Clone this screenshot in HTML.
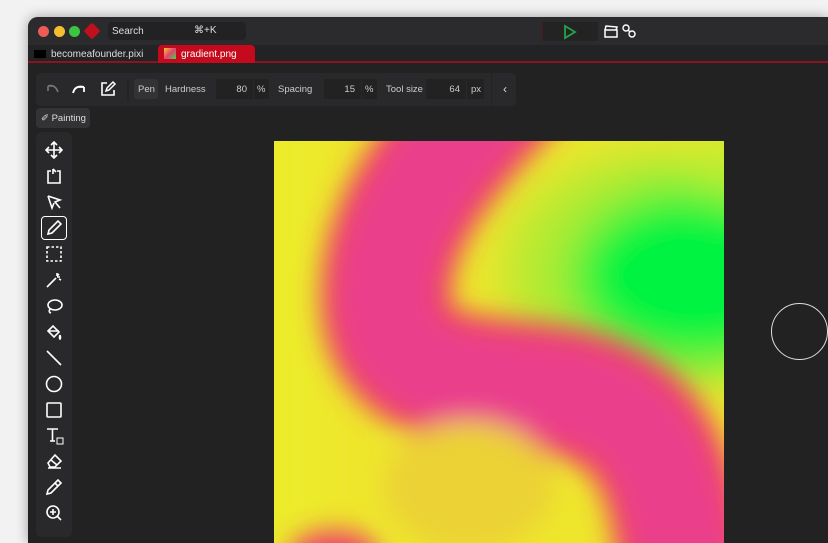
<!DOCTYPE html>
<html><head><style>
*{margin:0;padding:0;box-sizing:border-box}
html,body{width:828px;height:543px;overflow:hidden}
body{background:#f2f2f2;font-family:"Liberation Sans",sans-serif;position:relative}
.win{position:absolute;left:28px;top:17px;width:800px;height:526px;background:#222223;border-radius:10px 0 0 0;overflow:hidden;box-shadow:0 0 12px rgba(0,0,0,.35)}
.title{position:absolute;left:0;top:0;right:0;height:28px;background:#2b2b2d}
.dot{position:absolute;top:9px;width:11px;height:11px;border-radius:50%}
.tabs{position:absolute;left:0;top:28px;right:0;height:18px;background:#232325;border-bottom:2px solid #8a1520}
.t{position:absolute;font-size:10px;color:#ddd}
.tb{position:absolute;left:8px;top:56px;width:480px;height:33px;background:#29292b;border-radius:5px}
.lab{position:absolute;top:11px;font-size:9.5px;color:#ccc}
.inp{position:absolute;top:6px;height:20px;background:#222;font-size:9.5px;color:#ccc;text-align:right;padding:5px 6px 0 0}
.side{position:absolute;left:8px;top:115px;width:36px;height:405px;background:#29292b;border-radius:5px}
.side svg{position:absolute;left:9px}
.img{position:absolute;left:246px;top:124px;width:450px;height:402px;overflow:hidden}
</style></head><body>
<div class="win">
 <div class="title">
  <div class="dot" style="left:10px;background:#ee5b55"></div>
  <div class="dot" style="left:26px;background:#f5bd30"></div>
  <div class="dot" style="left:41px;background:#3cc540"></div>
  <div style="position:absolute;left:58px;top:8px;width:12px;height:12px;background:#c0101e;transform:rotate(45deg);border-radius:2px"></div>
  <div style="position:absolute;left:80px;top:5px;width:138px;height:18px;background:#222224;border-radius:4px"></div>
  <div class="t" style="left:84px;top:9px">Search</div>
  <div class="t" style="left:166px;top:8px">⌘+K</div>
  <div style="position:absolute;left:514px;top:5px;width:56px;height:19px;background:#232324;border-left:1px solid #4a1a1a"></div>
  <svg style="position:absolute;left:535px;top:7px" width="14" height="16"><path d="M2 2 L12 8 L2 14 Z" fill="none" stroke="#27a04a" stroke-width="1.8"/></svg>
  <svg style="position:absolute;left:575px;top:7px" width="16" height="15"><rect x="2" y="6" width="12" height="7" fill="none" stroke="#fff" stroke-width="1.5"/><path d="M2 6 L3 2 L14 3 L13 6" fill="none" stroke="#fff" stroke-width="1.5"/></svg>
  <svg style="position:absolute;left:593px;top:6px" width="16" height="16"><circle cx="5" cy="5" r="3" fill="none" stroke="#fff" stroke-width="1.4"/><circle cx="11" cy="11" r="3" fill="none" stroke="#fff" stroke-width="1.4"/><path d="M7 7 L9 9" stroke="#fff" stroke-width="1.4"/></svg>
 </div>
 <div class="tabs">
  <div style="position:absolute;left:6px;top:5px;width:12px;height:8px;background:#000"></div>
  <div class="t" style="left:23px;top:4px">becomeafounder.pixi</div>
  <div style="position:absolute;left:130px;top:0;width:97px;height:18px;background:#c40a1c;border-radius:4px 4px 0 0"></div>
  <div style="position:absolute;left:136px;top:3px;width:12px;height:11px;background:linear-gradient(135deg,#e8d030,#e84070,#30e050)"></div>
  <div class="t" style="left:153px;top:4px;color:#fff">gradient.png</div>
 </div>
 <div class="tb">
  <svg style="position:absolute;left:8px;top:9px" width="16" height="14"><path d="M4 4 Q11 2 14 10 M4 4 L4 9 M4 4 L9 4" fill="none" stroke="#777" stroke-width="1.6"/></svg>
  <svg style="position:absolute;left:35px;top:9px" width="16" height="14"><path d="M2 11 Q4 3 13 5 M13 5 L13 10 M13 5 L8 5" fill="none" stroke="#fff" stroke-width="1.8"/></svg>
  <svg style="position:absolute;left:63px;top:7px" width="18" height="18"><path d="M8 3 H3 V15 H15 V10" fill="none" stroke="#fff" stroke-width="1.6"/><path d="M7 11 L8 8 L14 2 L16 4 L10 10 Z" fill="none" stroke="#fff" stroke-width="1.5"/></svg>
  <div style="position:absolute;left:91px;top:6px;width:2px;height:22px;background:#242426"></div>
  <div style="position:absolute;left:98px;top:6px;width:24px;height:20px;background:#333336;border-radius:3px"></div>
  <div class="lab" style="left:102px">Pen</div>
  <div class="lab" style="left:129px">Hardness</div>
  <div class="inp" style="left:180px;width:37px">80</div>
  <div class="inp" style="left:218px;width:15px;padding:5px 0 0 3px;text-align:left">%</div>
  <div class="lab" style="left:242px">Spacing</div>
  <div class="inp" style="left:288px;width:37px">15</div>
  <div class="inp" style="left:326px;width:15px;padding:5px 0 0 3px;text-align:left">%</div>
  <div class="lab" style="left:350px">Tool size</div>
  <div class="inp" style="left:390px;width:40px">64</div>
  <div class="inp" style="left:431px;width:17px;padding:5px 0 0 4px;text-align:left">px</div>
  <div style="position:absolute;left:455px;top:0;width:1px;height:33px;background:#232325"></div>
  <div class="lab" style="left:467px;top:9px;font-size:12px;color:#ddd">‹</div>
 </div>
 <div style="position:absolute;left:8px;top:91px;width:54px;height:20px;background:#333336;border-radius:4px;font-size:9.5px;color:#ddd;padding:5px 0 0 5px">✐ Painting</div>
 <div class="side">
  <svg style="top:9px" width="18" height="18" fill="none" stroke="#fff" stroke-width="1.6"><path d="M9 1V17M1 9H17M6 4L9 1L12 4M6 14L9 17L12 14M4 6L1 9L4 12M14 6L17 9L14 12"/></svg>
  <svg style="top:35px" width="18" height="18" fill="none" stroke="#fff" stroke-width="1.6"><path d="M6 4H3V16H15V4H12M8 7V2M8 2L11 5"/></svg>
  <svg style="top:61px" width="18" height="18" fill="none" stroke="#fff" stroke-width="1.6"><path d="M3 3L15 7L10 9L15 15M3 3L7 15L9 10"/></svg>
  <div style="position:absolute;left:5px;top:84px;width:26px;height:24px;border:1.5px solid #fff;border-radius:4px"></div>
  <svg style="top:87px" width="18" height="18" fill="none" stroke="#fff" stroke-width="1.6"><path d="M3 15L4 11L13 2L16 5L7 14Z"/></svg>
  <svg style="top:113px" width="18" height="18" fill="none" stroke="#fff" stroke-width="1.6" stroke-dasharray="2.5 2"><rect x="2" y="2" width="14" height="14"/></svg>
  <svg style="top:139px" width="18" height="18" fill="none" stroke="#fff" stroke-width="1.6"><path d="M2 16L11 7M12 2V5M15 6H12M14 3L12 5M16 9L14 8"/></svg>
  <svg style="top:165px" width="18" height="18" fill="none" stroke="#fff" stroke-width="1.6"><ellipse cx="10" cy="8" rx="7" ry="5"/><path d="M5 12Q3 15 6 16"/></svg>
  <svg style="top:191px" width="18" height="18" fill="none" stroke="#fff" stroke-width="1.6"><path d="M3 8L8 3L14 9L9 14Z M3 8H14M15 12Q16 15 15 16Q14 15 15 12"/></svg>
  <svg style="top:217px" width="18" height="18" fill="none" stroke="#fff" stroke-width="1.6"><path d="M2 2L16 16"/></svg>
  <svg style="top:243px" width="18" height="18" fill="none" stroke="#fff" stroke-width="1.6"><circle cx="9" cy="9" r="7.5"/></svg>
  <svg style="top:269px" width="18" height="18" fill="none" stroke="#fff" stroke-width="1.6"><rect x="2" y="2" width="14" height="14" rx="1"/></svg>
  <svg style="top:294px" width="20" height="20" fill="none" stroke="#fff" stroke-width="1.6"><path d="M2 3H13M7.5 3V15M5 15H10"/><rect x="12" y="12" width="6" height="6" stroke-width="1"/></svg>
  <svg style="top:320px" width="18" height="18" fill="none" stroke="#fff" stroke-width="1.6"><path d="M3 11L10 3L16 9L10 15H5Z M6 8L12 13 M3 16H16"/></svg>
  <svg style="top:346px" width="18" height="18" fill="none" stroke="#fff" stroke-width="1.6"><path d="M2 16L3 12L10 5L13 8L6 15Z M10 5L13 2L16 5L13 8"/></svg>
  <svg style="top:372px" width="18" height="18" fill="none" stroke="#fff" stroke-width="1.6"><circle cx="8" cy="8" r="6"/><path d="M8 5V11M5 8H11M12.5 12.5L16 16"/></svg>
 </div>
 <div class="img">
  <svg width="450" height="402" viewBox="0 0 450 402" style="display:block">
   <defs>
    <filter id="b1" x="-50%" y="-50%" width="200%" height="200%"><feGaussianBlur stdDeviation="13"/></filter>
    <filter id="b2" x="-50%" y="-50%" width="200%" height="200%"><feGaussianBlur stdDeviation="22"/></filter>
   </defs>
   <rect x="0" y="0" width="450" height="402" fill="#eee62c"/>
   <g filter="url(#b2)">
    <ellipse cx="390" cy="130" rx="160" ry="120" fill="#b4ea30"/>
    <ellipse cx="420" cy="135" rx="125" ry="90" fill="#00f340"/>
    <ellipse cx="470" cy="20" rx="60" ry="35" fill="#c8ec2e"/>
    <rect x="-50" y="-50" width="95" height="500" fill="#ecec2a"/>
   </g>
   <g filter="url(#b1)">
    <path d="M265 -90 C180 0 110 70 112 160 C114 240 190 238 270 248 C360 260 400 300 410 440" fill="none" stroke="#ee3e62" stroke-width="130"/>
    <path d="M265 -90 C180 0 110 70 112 160 C114 240 190 238 270 248 C360 260 400 300 410 440" fill="none" stroke="#ea3f8c" stroke-width="95"/>
    <ellipse cx="195" cy="345" rx="85" ry="65" fill="#ecd235"/>
    <ellipse cx="60" cy="415" rx="45" ry="25" fill="#ee3e6e"/>
   </g>
  </svg>
 </div>
 <div style="position:absolute;left:743px;top:286px;width:57px;height:57px;border:1.5px solid #ddd;border-radius:50%"></div>
</div>
</body></html>
